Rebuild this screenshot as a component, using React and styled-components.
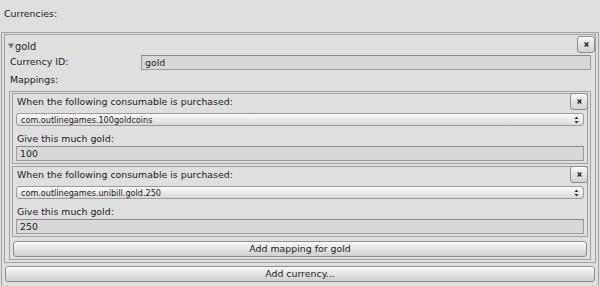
import React from 'react'
import styled, { createGlobalStyle } from 'styled-components'

const GlobalStyle = createGlobalStyle`
    body {
        margin: 0;
        background: #dfdfdf;
        font-family: "DejaVu Sans", "Liberation Sans", sans-serif;
        font-size: 9.4px;
        color: #1c1c1c;
    }
`

const mappings = [
    { product: 'com.outlinegames.100goldcoins', amount: '100' },
    { product: 'com.outlinegames.unibill.gold.250', amount: '250' },
]

function CloseButton() {
    return (
        <SmallButton>
            <svg width='5' height='5' viewBox='0 0 5 5'>
                <path d='M0.6 0.6 L4.4 4.4 M4.4 0.6 L0.6 4.4' stroke='#2a2a2a' strokeWidth='1.4' />
            </svg>
        </SmallButton>
    )
}

function Popup({ value }) {
    return (
        <Dropdown>
            <span>{value}</span>
            <svg width='5' height='8' viewBox='0 0 5 8'>
                <path d='M2.5 0.5 L4.5 3 L0.5 3 Z M0.5 5 L4.5 5 L2.5 7.5 Z' fill='#333' />
            </svg>
        </Dropdown>
    )
}

function Mapping({ product, amount }) {
    return (
        <MappingItem>
            <HeaderRow edge={4}>
                <Label indent={1}>When the following consumable is purchased:</Label>
                <CloseButton />
            </HeaderRow>
            <Popup value={product} />
            <Label indent={1} spaced>Give this much gold:</Label>
            <Field>{amount}</Field>
        </MappingItem>
    )
}

export default function App() {
    return (
        <>
            <GlobalStyle />
            <Title>Currencies:</Title>
            <ListBox>
                <CurrencyBox>
                    <HeaderRow edge={4} flat>
                        <Foldout>
                            <svg width='6' height='6' viewBox='0 0 6 6'>
                                <path d='M0 0.5 L6 0.5 L3 5.5 Z' fill='#707070' />
                            </svg>
                            gold
                        </Foldout>
                        <CloseButton />
                    </HeaderRow>
                    <FieldRow>
                        <Label indent={2} fixed>Currency ID:</Label>
                        <Field grow>gold</Field>
                    </FieldRow>
                    <Label indent={2} gap={3}>Mappings:</Label>
                    <MappingsBox>
                        <MappingList>
                            {mappings.map(m => <Mapping key={m.product} {...m} />)}
                        </MappingList>
                        <WideButton inset={1}>Add mapping for gold</WideButton>
                    </MappingsBox>
                </CurrencyBox>
                <WideButton inset={1} top={3}>Add currency...</WideButton>
            </ListBox>
        </>
    )
}

const Title = styled.div`
    height: 32px;
    box-sizing: border-box;
    padding: 8px 0 0 4px;
    line-height: 12px;
`
const ListBox = styled.div`
    margin: 0 1px;
    border: 1px solid #a2a2a2;
    border-bottom: none;
    padding: 1px 2px 6px;
    display: flex;
    flex-direction: column;
`
const CurrencyBox = styled.div`
    border: 1px solid #a2a2a2;
    padding: 1px 4px 2px 3px;
    display: flex;
    flex-direction: column;
`
const HeaderRow = styled.div`
    display: flex;
    align-items: center;
    justify-content: space-between;
    height: 17px;
    margin-right: ${props => -props.edge}px;
    margin-top: ${props => props.flat ? 0 : -1}px;
`
const Foldout = styled.div`
    display: flex;
    align-items: center;
    gap: 1px;
    padding-top: 3px;
    font-size: 9.8px;
`
const SmallButton = styled.button`
    width: 18px;
    height: 17px;
    padding: 0;
    display: flex;
    align-items: center;
    justify-content: center;
    border: 1px solid #8e8e8e;
    border-radius: 3px;
    background: linear-gradient(#f7f7f7, #d2d2d2);
    box-shadow: inset 0 1px 0 #ffffff;
`
const FieldRow = styled.div`
    display: flex;
    align-items: center;
    margin-top: 2px;
`
const Label = styled.div`
    padding-left: ${props => props.indent}px;
    margin-top: ${props => props.gap || (props.spaced ? 6 : 0)}px;
    height: ${props => props.fixed ? 15 : 14}px;
    width: ${props => props.fixed ? '131px' : 'auto'};
    flex-shrink: 0;
    line-height: 14px;
    white-space: nowrap;
`
const Field = styled.div`
    height: 15px;
    box-sizing: border-box;
    flex: ${props => props.grow ? 1 : 'none'};
    border: 1px solid #9c9c9c;
    border-top-color: #8a8a8a;
    background: #d8d8d8;
    padding-left: 3px;
    line-height: 13px;
`
const MappingsBox = styled.div`
    margin: 4px 0 0 1px;
    border: 1px solid #a2a2a2;
    padding: 1px 2px 2px;
    display: flex;
    flex-direction: column;
`
const MappingList = styled.div`
    display: flex;
    flex-direction: column;
    gap: 2px;
`
const MappingItem = styled.div`
    border: 1px solid #a2a2a2;
    padding: 0 3px 2px;
    display: flex;
    flex-direction: column;
`
const Dropdown = styled.div`
    margin-top: 3px;
    height: 13px;
    box-sizing: border-box;
    display: flex;
    align-items: center;
    justify-content: space-between;
    padding: 0 4px 0 4px;
    border: 1px solid #9a9a9a;
    border-radius: 3px;
    background: linear-gradient(#fbfbfb, #d9d9d9);
    font-size: 8.1px;
`
const WideButton = styled.button`
    margin: ${props => props.top || 4}px ${props => props.inset}px 0 ${props => props.inset}px;
    height: 16px;
    padding: 0;
    border: 1px solid #8e8e8e;
    border-radius: 3px;
    background: linear-gradient(#f7f7f7, #d0d0d0);
    box-shadow: inset 0 1px 0 #ffffff;
    font-family: "DejaVu Sans", "Liberation Sans", sans-serif;
    font-size: 9.4px;
    color: #1c1c1c;
    line-height: 14px;
`
